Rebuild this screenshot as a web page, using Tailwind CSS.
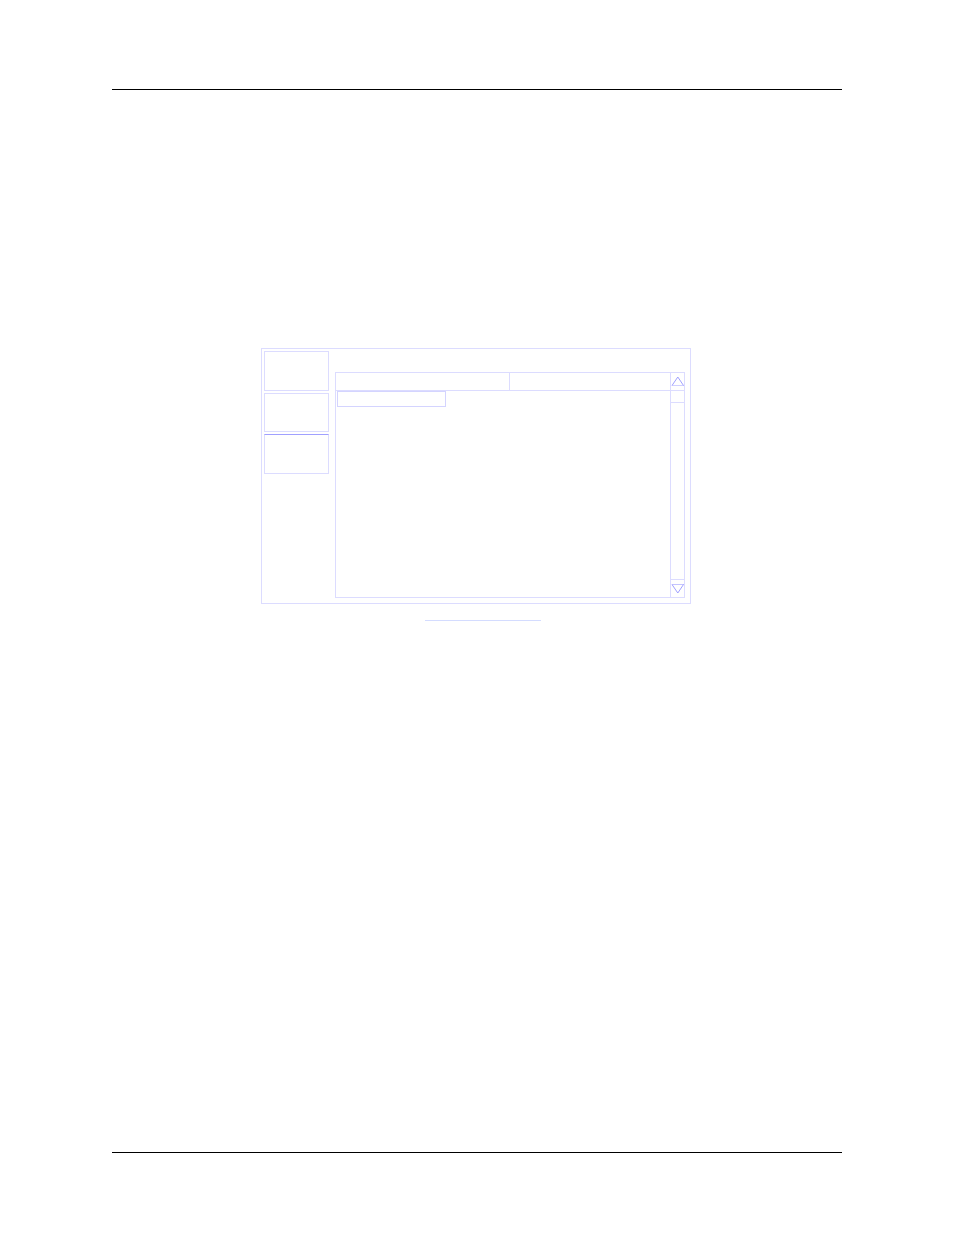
<!DOCTYPE html>
<html lang="en">

<head>
    <meta charset="UTF-8">
    <meta name="viewport" content="width=device-width, initial-scale=1.0">
    <title>List screen</title>
    <script src="https://cdn.jsdelivr.net/npm/@tailwindcss/browser@4"></script>
</head>

<body class="bg-white">
    <div class="flex min-h-screen flex-col px-28 pt-[89px] pb-[82px]">
        <hr class="border-black">
        <main class="flex grow justify-center pt-[258px]">
            <div class="w-[432px] pr-0.5">
                <section class="flex h-64 gap-1.5 border border-[#dcdcff] pt-0.5 pr-[5px] pb-[5px] pl-0.5">
                    <nav class="flex w-[65px] shrink-0 flex-col gap-0.5">
                        <button type="button" aria-label="First" class="h-10 border border-[#dcdcff]"></button>
                        <button type="button" aria-label="Second" class="h-[39px] border border-[#dcdcff]"></button>
                        <button type="button" aria-label="Third" class="h-10 border border-[#dcdcff] border-t-[#a0a0ff]"></button>
                    </nav>
                    <div class="mt-[21px] flex grow border border-[#dcdcff]">
                        <div class="grow">
                            <table class="w-full table-fixed border-collapse">
                                <thead>
                                    <tr class="h-[18px]">
                                        <th scope="col" aria-label="Name" class="w-[174px] p-0 shadow-[inset_-1px_-1px_#dcdcff]"></th>
                                        <th scope="col" aria-label="Value" class="p-0 shadow-[inset_0_-1px_#dcdcff]"></th>
                                    </tr>
                                </thead>
                            </table>
                            <input type="text" aria-label="Entry" class="ml-px block h-4 w-[109px] border border-[#d4d4ff]">
                        </div>
                        <!-- scrollbar -->
                        <div class="flex w-3.5 shrink-0 flex-col border-l border-[#dcdcff]">
                            <button type="button" aria-label="Scroll up" class="h-[18px] border-b border-[#dcdcff]">
                                <svg class="block h-[17px] w-[13px]" viewBox="0 0 13 17" fill="none">
                                    <path d="M1 12.5H13" stroke="#d0d0ff" />
                                    <path d="M1 12.5L6.8 4L12.5 12.5" stroke="#a0a0ff" />
                                </svg>
                            </button>
                            <div class="h-3 border-b border-[#dcdcff]"></div>
                            <div class="grow"></div>
                            <button type="button" aria-label="Scroll down" class="h-[18px] border-t border-[#dcdcff]">
                                <svg class="block h-[17px] w-[13px]" viewBox="0 0 13 17" fill="none">
                                    <path d="M1 4.5H13" stroke="#c4c4ff" />
                                    <path d="M1 4.5L6.8 13L12.5 4.5" stroke="#a0a0ff" />
                                </svg>
                            </button>
                        </div>
                    </div>
                </section>
                <div class="mt-4 ml-[164px] w-[116px] border-t border-[#d4dcff]"></div>
            </div>
        </main>
        <hr class="border-black">
    </div>
</body>

</html>
